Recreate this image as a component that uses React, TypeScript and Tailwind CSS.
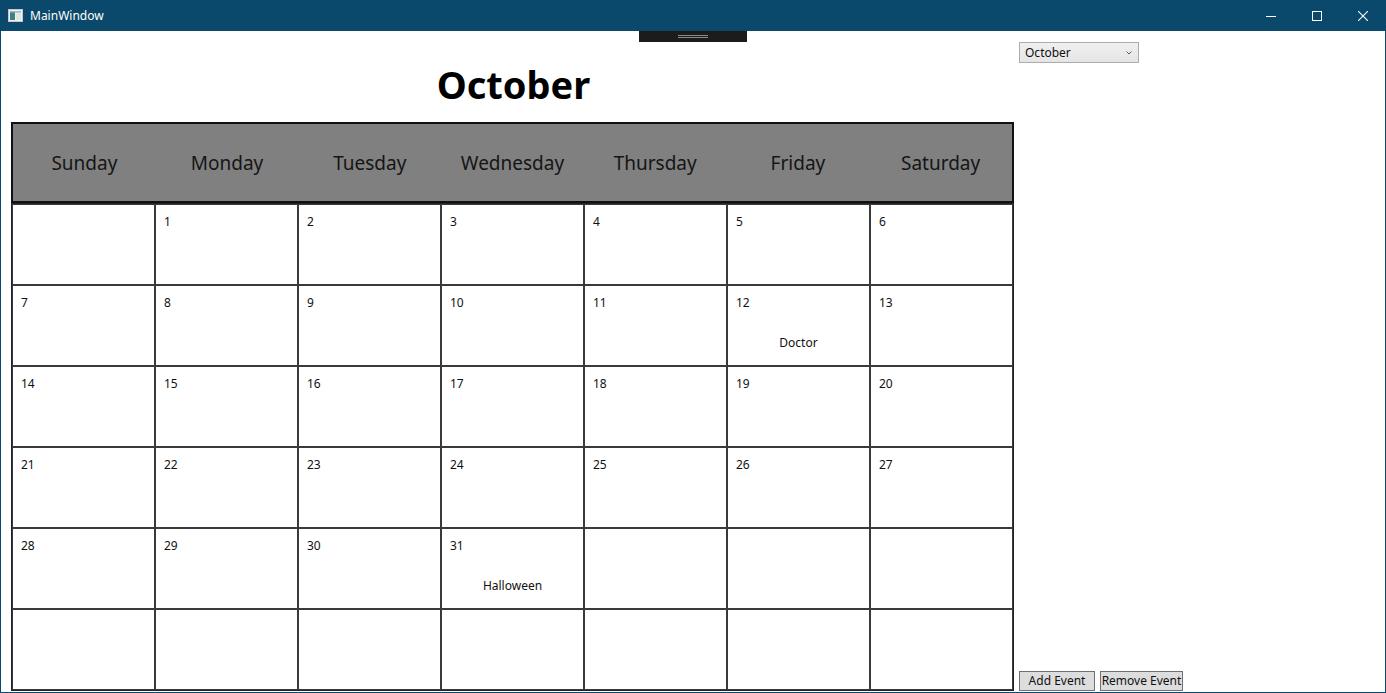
import React from "react";

const days = ["Sunday", "Monday", "Tuesday", "Wednesday", "Thursday", "Friday", "Saturday"];

type Cell = { n?: number; ev?: string };

function buildCells(): Cell[] {
  const cells: Cell[] = [{}];
  for (let i = 1; i <= 31; i++) {
    const c: Cell = { n: i };
    if (i === 12) c.ev = "Doctor";
    if (i === 31) c.ev = "Halloween";
    cells.push(c);
  }
  while (cells.length < 42) cells.push({});
  return cells;
}

export default function App() {
  const cells = buildCells();
  const font = { fontFamily: '"Noto Sans", "Open Sans", sans-serif' };
  return (
    <div
      className="w-[1386px] h-[693px] bg-[#0a496b] flex flex-col overflow-hidden"
      style={font}
    >
      {/* Title bar */}
      <div className="h-[31px] flex items-center text-white shrink-0">
        <div className="pl-[8px] pr-[8px] flex items-center">
          <svg width="15" height="13" viewBox="0 0 15 13">
            <rect x="0.5" y="0.5" width="14" height="12" fill="#f2f2f2" stroke="#c8c8c8" />
            <rect x="2" y="2" width="5" height="9" fill="#3f7f86" />
            <rect x="8" y="2" width="5" height="9" fill="#dfe6e8" />
            <rect x="2" y="2" width="11" height="1.5" fill="#9fb5bb" />
          </svg>
        </div>
        <span className="text-[12px] leading-none ml-[-1px]">MainWindow</span>
        <div className="ml-auto flex h-full">
          <div className="w-[46px] h-full flex items-center justify-center">
            <svg width="10" height="10" viewBox="0 0 10 10">
              <line x1="0" y1="5.5" x2="10" y2="5.5" stroke="white" strokeWidth="1" />
            </svg>
          </div>
          <div className="w-[46px] h-full flex items-center justify-center">
            <svg width="10" height="10" viewBox="0 0 10 10">
              <rect x="0.5" y="0.5" width="9" height="9" fill="none" stroke="white" strokeWidth="1" />
            </svg>
          </div>
          <div className="w-[46px] h-full flex items-center justify-center">
            <svg width="10" height="10" viewBox="0 0 10 10">
              <line x1="0" y1="0" x2="10" y2="10" stroke="white" strokeWidth="1.1" />
              <line x1="10" y1="0" x2="0" y2="10" stroke="white" strokeWidth="1.1" />
            </svg>
          </div>
        </div>
      </div>

      {/* Client area */}
      <div className="flex-1 mx-[1px] mb-[1px] bg-white relative flex min-h-0">
        {/* drag handle */}
        <div className="absolute left-[638px] top-0 w-[108px] h-[11px] bg-[#1c1c1c] flex flex-col items-center justify-center gap-[1px]">
          <div className="w-[30px] h-[1px] bg-[#8a8a8a]" />
          <div className="w-[30px] h-[1px] bg-[#8a8a8a]" />
        </div>

        {/* Left: calendar */}
        <div className="w-[1013px] pl-[10px] flex flex-col shrink-0">
          <div className="h-[91px] flex items-center justify-center">
            <h1 className="text-[38px] font-bold text-black leading-none mt-[14px] ml-[2px]">October</h1>
          </div>
          <div className="w-[1003px] h-[81px] bg-[#808080] border-2 border-[#111] grid grid-cols-7 shrink-0">
            {days.map((d) => (
              <div key={d} className="flex items-center justify-center text-[19px] text-[#151515] pt-[2px]">
                {d}
              </div>
            ))}
          </div>
          <div className="w-[1003px] flex-1 border border-[#222] grid grid-cols-7 grid-rows-6 mb-[1px]">
            {cells.map((c, i) => (
              <div key={i} className="border border-[#3a3a3a] pl-[8px] pt-[9px] text-[12px] leading-[16px] text-[#111]">
                {c.n !== undefined && <div>{c.n}</div>}
                {c.ev && <div className="text-center mt-[24px] pr-[8px]">{c.ev}</div>}
              </div>
            ))}
          </div>
        </div>

        {/* Right pane */}
        <div className="flex-1 pl-[5px] flex flex-col justify-between pb-[1px]">
          <div className="mt-[11px] w-[120px] h-[21px] border border-[#acacac] bg-gradient-to-b from-[#f0f0f0] to-[#e5e5e5] flex items-center pl-[5px] pr-[6px] text-[12px] text-[#111]">
            <span>October</span>
            <svg className="ml-auto" width="6" height="4" viewBox="0 0 6 4">
              <polyline points="0.5,0.5 3,3 5.5,0.5" fill="none" stroke="#606060" strokeWidth="1" />
            </svg>
          </div>
          <div className="flex gap-[5px]">
            <button className="w-[76px] h-[20px] border border-[#707070] bg-[#dddddd] text-[12px] leading-none text-[#111]">
              Add Event
            </button>
            <button className="w-[83px] h-[20px] border border-[#707070] bg-[#dddddd] text-[12px] leading-none text-[#111]">
              Remove Event
            </button>
          </div>
        </div>
      </div>
    </div>
  );
}
